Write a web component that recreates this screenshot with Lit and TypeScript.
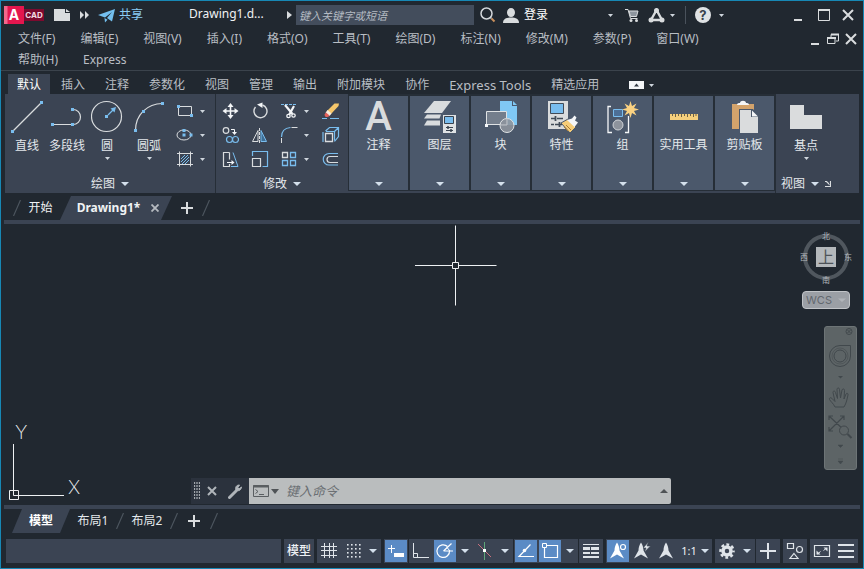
import { LitElement, html, css, svg, nothing } from "lit";
import type { SVGTemplateResult } from "lit";
import { customElement } from "lit/decorators.js";

const BLUE = "#79bdee";
const PALE = "#d9dcde";
const WHITE = "#f4f6f8";

type Art = SVGTemplateResult;

/** Wraps artwork in an svg whose user space starts at x, y. */
const icon = (x: number, y: number, w: number, h: number, art: Art) =>
  html`<svg width=${w} height=${h} viewBox="${x} ${y} ${w} ${h}" fill="none" aria-hidden="true">${art}</svg>`;

/** A 3px grip square centred on the point. */
const grip = (x: number, y: number) =>
  svg`<rect x=${x - 1.5} y=${y - 1.5} width="3" height="3" fill=${BLUE} />`;

const smallCaret = icon(0, 0, 5, 3, svg`<path d="M0 0h5L2.5 3z" fill="#cfd6dd"/>`);
const caret = icon(0, 0, 8, 4, svg`<path d="M0 0h8L4 4z" fill="#d4e0ec"/>`);

/* ---- title bar ---- */
const sheet = icon(0, 0, 16, 12, svg`<path d="M0 0h11v4h5v8H0z" fill="${PALE}"/><path d="M12 0l4 3h-4z" fill="${PALE}"/>`);
const doubleArrow = icon(0, 0, 9, 8, svg`<path d="M0 0l4 4-4 4zM5 0l4 4-4 4z" fill="${PALE}"/>`);
const plane = icon(98, 8, 17, 15, svg`<path d="M98 15L115 9l-3 12.5-5-3.500 5-6-7 5.500z" fill="#73bfef"/><path d="M104.500 18l3 1.800-2.500 2.700z" fill="#73bfef"/>`);
const rightArrow = icon(0, 0, 5, 8, svg`<path d="M0 0l5 4-5 4z" fill="${PALE}"/>`);
const lens = icon(480, 7, 16, 16, svg`<circle cx="486.500" cy="13.500" r="5.500" stroke="#d4d8dc" stroke-width="1.500"/><path d="M490.500 17.500l1 1" stroke="#d4d8dc" stroke-width="1.500"/><path d="M491.500 18.500l3 3" stroke="#c98f5c" stroke-width="2"/>`);
const person = icon(503, 7, 16, 15, svg`<ellipse cx="511" cy="11.500" rx="4" ry="4.500" fill="${PALE}"/><path d="M503 22c0-4 3-5.500 8-5.500s8 1.500 8 5.500z" fill="${PALE}"/>`);
const cart = icon(626, 8, 14, 15, svg`<path d="M626 9.500h3l2.500 9h7" stroke="${PALE}"/><path d="M630 11h9l-1.500 5.500h-6z" fill="#8d959e" stroke="${PALE}"/><circle cx="632" cy="20.500" r="1.500" fill="${PALE}"/><circle cx="637.500" cy="20.500" r="1.500" fill="${PALE}"/>`);
const hub = icon(648, 8, 17, 15, svg`<path d="M656.500 10L651 20h11z" stroke="${PALE}" stroke-width="2.400"/><circle cx="656.500" cy="10.500" r="2.500" fill="${PALE}"/><circle cx="651" cy="20" r="2.500" fill="${PALE}"/><circle cx="662" cy="20" r="2.500" fill="${PALE}"/>`);
const minimize = icon(0, 0, 8, 12, svg`<path d="M0 11h8" stroke="${PALE}" stroke-width="2"/>`);
const maximize = icon(0, 0, 12, 12, svg`<path d="M.5 1.500h11v10H.5z" stroke="${PALE}"/><path d="M0 1h12" stroke="${PALE}" stroke-width="2"/>`);
const closeMark = icon(0, 0, 12, 12, svg`<path d="M1 1l10 10M11 1L1 11" stroke="${PALE}" stroke-width="2"/>`);
const restore = icon(0, 0, 12, 12, svg`<path d="M4 4V1.500h7.500V8H9" stroke="${PALE}"/><path d="M.5 5h7.500v5.500H.5z" stroke="${PALE}"/><path d="M4 1.500h8M0 5h9" stroke="${PALE}" stroke-width="2"/>`);

/* ---- ribbon, draw panel ---- */
const lineArt = icon(11, 100, 32, 36, svg`<path d="M13 132l28-28" stroke="${PALE}" stroke-width="1.200"/>${grip(12.5, 132.5)}${grip(41.5, 103.5)}`);
const polyArt = icon(51, 100, 32, 36, svg`<path d="M53 125.500h20a7.500 7.500 0 0 0 0-15" stroke="${PALE}" stroke-width="1.200"/>${grip(52.5, 125.5)}${grip(72.5, 125.5)}${grip(72.5, 110.5)}`);
const circleArt = icon(91, 100, 32, 36, svg`<circle cx="106.500" cy="117.500" r="15" stroke="${PALE}" stroke-width="1.200"/>${grip(106.5, 117.5)}<path d="M108 116l5-5" stroke=${BLUE} stroke-width="1.300"/><path d="M116 108l-1.500 5.500-4-4z" fill=${BLUE}/>`);
const arcArt = icon(134, 100, 32, 36, svg`<path d="M136.500 131.500C136.500 116 148 104.500 163.500 104.500" stroke="${PALE}" stroke-width="1.200"/>${grip(136.5, 131.5)}${grip(144.5, 112.5)}${grip(163.5, 104.5)}`);
const rectArt = icon(176, 102, 18, 18, svg`<path d="M178.500 106.500h13v9h-13z" stroke="${PALE}"/>${grip(178.5, 106.5)}${grip(191.5, 115.5)}`);
const ellipseArt = icon(176, 126, 18, 18, svg`<ellipse cx="184" cy="135" rx="7" ry="5" stroke="${PALE}"/>${grip(184, 135)}${grip(184, 130.5)}${grip(191, 135)}`);
const hatchArt = icon(176, 150, 18, 18, svg`<path d="M181 159l4-4M181 162l7-7M182 164l7-7M185 164l4-4" stroke=${BLUE}/><path d="M179.500 151.500v15M190.500 151.500v15M177 153.500h16M177 164.500h16" stroke="${PALE}"/>`);

/* ---- ribbon, modify panel ---- */
const moveArt = icon(221, 102, 18, 18, svg`<path d="M230.500 105v12M224.500 111h12" stroke="${WHITE}" stroke-width="1.600"/><path d="M230.500 103l3 4h-6zM230.500 119l3-4h-6zM222.500 111l4-3v6zM238.500 111l-4-3v6z" fill="${WHITE}"/>`);
const rotateArt = icon(251, 102, 18, 18, svg`<path d="M255.500 107a6.500 6.500 0 1 0 7-2" stroke="${PALE}" stroke-width="1.400"/><path d="M257 104.500l5.500-2v5.500z" fill="${WHITE}"/>`);
const trimArt = icon(280, 102, 18, 18, svg`<path d="M281 104.500h16" stroke=${BLUE} stroke-dasharray="3 1"/><path d="M285 105l7.500 9M294 106l-5 9" stroke="${WHITE}" stroke-width="2.200"/><circle cx="288.500" cy="116" r="1.700" stroke="${WHITE}" stroke-width="1.300"/><circle cx="293.500" cy="115.500" r="1.700" stroke="${WHITE}" stroke-width="1.300"/>`);
const eraseArt = icon(322, 102, 18, 18, svg`<path d="M334.500 103.500h4.500l-.5 2.500-8 8.500-4-3z" fill="#f5c66b"/><path d="M327.500 110l4 3.500-2 2.500-4-3z" fill="#f7ebe0"/><path d="M326 112.500l3.500 3c-1.500 2.500-5 2-5-1z" fill="#e2615a"/><path d="M322 118.500h5M330 118.500h9" stroke=${BLUE}/>`);
const copyArt = icon(221, 126, 18, 18, svg`<circle cx="226" cy="130.500" r="2.800" stroke="${PALE}" stroke-width="1.200"/><circle cx="229.500" cy="139.500" r="3" stroke=${BLUE} stroke-width="1.200"/><circle cx="235.500" cy="139.500" r="3" stroke=${BLUE} stroke-width="1.200"/><path d="M231 129.500h3.500v3" stroke="${WHITE}"/><path d="M232 132h5l-2.500 3z" fill="${WHITE}"/>`);
const mirrorArt = icon(251, 126, 18, 18, svg`<path d="M252.500 141.500h5.500v-11z" stroke="${PALE}"/><path d="M261 141.500h5.500l-5.500-11z" fill="#3f6f96" stroke=${BLUE}/><path d="M259.500 128v15" stroke="${PALE}" stroke-dasharray="3 1"/>`);
const filletArt = icon(280, 126, 18, 18, svg`<path d="M281.500 137c0-5 3-9 9-9.500" stroke=${BLUE} stroke-width="1.200"/><path d="M291.500 127.500h6M281.500 138v5" stroke="${PALE}"/>`);
const explodeArt = icon(322, 126, 18, 18, svg`<path d="M325.500 131l4-3.500h9v9l-4 5M338 128l-4 4M326 131.500h8.500v9M323 132v10" stroke=${BLUE} stroke-width="1.200"/><path d="M325.500 133.500h7v8h-7z" stroke="${PALE}" stroke-width="1.300"/>`);
const stretchArt = icon(221, 150, 18, 18, svg`<path d="M229.500 152.500h-6v14h6M229.500 152.500v7M229.500 164v3" stroke="${PALE}" stroke-width="1.200"/><path d="M233 152.500l5 14h-7" stroke=${BLUE}/><path d="M227 162.500h6" stroke="${WHITE}"/><path d="M231.500 160l3 2.500-3 2.500z" fill="${WHITE}"/>`);
const scaleArt = icon(251, 150, 18, 18, svg`<path d="M252.500 156v-4.500h15v15h-5" stroke=${BLUE} stroke-width="1.200"/><path d="M252.500 158.500h8v8h-8z" stroke="${PALE}" stroke-width="1.200"/>`);
const arrayArt = icon(280, 150, 18, 18, svg`<path d="M282.500 152.500h5v5h-5z" stroke="${PALE}" stroke-width="1.300"/><path d="M290.500 152.500h5v5h-5zM282.500 160.500h5v5h-5zM290.500 160.500h5v5h-5z" stroke=${BLUE} stroke-width="1.300"/>`);
const offsetArt = icon(322, 150, 18, 18, svg`<path d="M338 156.500h-8a3 3 0 0 0 0 6h8" stroke="${PALE}" stroke-width="1.200"/><path d="M338 153.500h-9a5.500 5.500 0 0 0 0 11.500h9" stroke=${BLUE} stroke-width="1.200"/>`);

/* ---- ribbon, collapsed panels ---- */
const layersArt = icon(424, 99, 32, 34, svg`<path d="M434 100h17l-9 12h-18z" fill="${PALE}"/><path d="M427 113.500h14l-1.500 4H424z" fill="${PALE}"/><path d="M427 119.500h13v5h-16z" fill="${PALE}"/><path d="M442 113h15v20h-15z" fill="#4b586b"/><path d="M443 114h13v18h-13z" fill="#dfe2e4"/><path d="M444.500 115.500h9v7h-9z" fill=${BLUE} stroke="#39434f"/><path d="M446 126.500h7M446 129.500h7" stroke="#39434f"/><path d="M448 125v3M451 128v3" stroke="#39434f" stroke-width="1.500"/>`);
const blockArt = icon(485, 99, 32, 34, svg`<path d="M500 100h12v5h5v19h-17z" fill="#80c8f4"/><path d="M513 100l4 4h-4z" fill="#80c8f4"/><path d="M486.500 110.500h20v13h-20z" fill="#747e8c" stroke="#dfe2e4"/><circle cx="507" cy="124.500" r="7" fill="#8d939c" fill-opacity=".9" stroke="#dfe2e4"/><path d="M507 117v7h-7" stroke="#bcc1c7"/><path d="M485 123h3v3h-3z" fill="${WHITE}"/>`);
const propsArt = icon(546, 99, 32, 34, svg`<path d="M548 100h20v28h-20z" fill="#dadcdd"/><path d="M550.500 102.500h13v10h-13z" fill=${BLUE} stroke="#414b57"/><path d="M551 117.500h4M557 117.500h6M551 123.500h3M555 123.500h7" stroke="#414b57" stroke-width="1.500"/><path d="M555.500 115v5M559.500 121v5" stroke="#414b57" stroke-width="1.800"/><path d="M561 122l7-4 8 8-6 6z" fill="#f6cd78" stroke="#4b586b"/><path d="M567 119l5-1.500 2.500-3 2 2-1.500 3 3 2-3.500 4.500z" fill="${WHITE}"/><path d="M566 124l5 5M564 126l4 4" stroke="#a97b35"/>`);
const groupArt = icon(607, 99, 32, 34, svg`<path d="M611 105.500h-3v26h4M625 131.500h3.500V115" stroke="${WHITE}" stroke-width="1.300"/><path d="M613.500 108.500h9v7h-9z" fill="#4d6f96" stroke=${BLUE}/><circle cx="618" cy="124" r="5" fill="#8d939c" stroke="#cfd3d7"/><path d="M630.500 100l1.500 5 4.500-2.500-2.500 4.500 5 1.500-5 1.500 2.500 4.500-4.500-2.500-1.500 5-1.500-5-4.500 2.500 2.500-4.500-5-1.500 5-1.500-2.500-4.500 4.500 2.500z" fill="#fbd281"/>`);
const rulerArt = icon(668, 99, 32, 34, svg`<path d="M670 113h28v6h-28z" fill="#f5cf7c"/><path d="M672.500 113v2M675.500 113v3M678.500 113v2M681.500 113v3M684.500 113v2M687.500 113v3M690.500 113v2M693.500 113v3M696 113v2" stroke="#6c6146"/>`);
const pasteArt = icon(729, 99, 32, 34, svg`<path d="M732 103h22v25h-22z" fill="#d3a36c"/><path d="M737 104c0-2 2-2 3-2 0-3 6-3 6 0 1 0 3 0 3 2z" fill="${WHITE}"/><path d="M739 108h14l6 7v18h-20z" fill="#4b586b"/><path d="M740 109h11v7h7v16h-18z" fill="#dadcdd"/><path d="M752 109.500l6 6h-6z" fill="${WHITE}"/>`);
const baseArt = icon(790, 100, 32, 36, svg`<path d="M790 106h14v10h18v14h-32z" fill="#dadcdd"/>`);
const launcher = icon(0, 0, 6, 6, svg`<path d="M0 .5h1.500l3 3M5.500 0v5.500H0" stroke="${PALE}" stroke-width="1.200"/>`);

/* ---- tabs ---- */
const slash = icon(0, 0, 8, 16, svg`<path d="M7.500 0L.5 16" stroke="#4d565f" stroke-width="1.200"/>`);
const plus = icon(0, 0, 12, 12, svg`<path d="M6 0v12M0 6h12" stroke="${PALE}" stroke-width="2"/>`);
const tabClose = icon(0, 0, 8, 8, svg`<path d="M.5.5l7 7M7.500.5l-7 7" stroke="#b5bac0" stroke-width="1.800"/>`);

/* ---- status bar, each on a 24px square ---- */
const INK = "#dfe4e9";
const status = (art: Art) => icon(0, 0, 24, 24, art);
const dots = [6, 10, 14, 18].map((y) => [6, 10, 14, 18].map((x) => svg`<rect x=${x} y=${y - 1} width="1.600" height="1.600" fill=${INK} />`));
const scaleFigure = "M12 3.500c1.500 2 2.500 5 2.500 8l4.500 8-7-4-7 4 4.500-8c0-3 1-6 2.500-8z";
const s = {
  grid: status(svg`<path d="M7.500 4v15M12.500 4v15M16.500 4v15M4 7.500h16M4 11.500h16M4 16.500h16" stroke=${INK}/>`),
  dots: status(svg`${dots}`),
  infer: status(svg`<path d="M7.500 6v8M4 9.500h7" stroke="#fff"/><path d="M10 14h10v4H10z" fill="#fff"/>`),
  ortho: status(svg`<path d="M4.500 4v14.500H20M4.500 14.500h4v4" stroke=${INK}/>`),
  polar: status(svg`<path d="M14.500 7.500a6.300 6.300 0 1 0 2 4" stroke="#fff" stroke-width="1.200"/><path d="M10.500 12l8-7.500M10.500 12H20" stroke="#fff" stroke-width="1.200"/><path d="M14 8.500l3 3.500" stroke="#fff"/>`),
  iso: status(svg`<path d="M5 5l13 13" stroke="#c9707e"/><path d="M11.500 3v18" stroke="#5fa67a"/><path d="M10 10h3v3h-3z" fill="#fff"/>`),
  track: status(svg`<path d="M16.500 5.500L5 17.500h15" stroke="#fff" stroke-width="1.200"/><circle cx="10.500" cy="11.500" r="1.800" fill="#fff"/>`),
  snap: status(svg`<path d="M6.500 6.500h13v12h-13z" stroke="#fff" stroke-width="1.200"/><path d="M4.500 4.500h4v4h-4z" fill="#5b8bc5" stroke="#fff"/>`),
  weight: status(svg`<path d="M4 5.500h16" stroke=${INK}/><path d="M4 9.500h7M12 9.500h8" stroke=${INK} stroke-width="3"/><path d="M4 14h7M12 14h8" stroke=${INK} stroke-width="2"/><path d="M4 18h16" stroke=${INK} stroke-width="2"/>`),
  scaleA: status(svg`<path transform="translate(-1)" d=${scaleFigure} fill="#fff"/><circle cx="17" cy="8" r="2.500" fill="#5b8bc5" stroke="#fff" stroke-width="1.200"/>`),
  scaleB: status(svg`<path transform="translate(-1)" d=${scaleFigure} fill=${INK}/><path d="M18.500 3L13 9h3L14.500 13l6-6H17z" fill=${INK} stroke="#3b4453" stroke-width=".6"/>`),
  scaleC: status(svg`<path d=${scaleFigure} fill=${INK}/>`),
  gear: status(svg`<circle cx="12" cy="12" r="4" stroke=${INK} stroke-width="3.500"/><circle cx="12" cy="12" r="6.500" stroke=${INK} stroke-width="2.500" stroke-dasharray="2.800 2.305" stroke-dashoffset="1.400"/>`),
  plus: status(svg`<path d="M12 4v16M4 12h16" stroke=${INK} stroke-width="2"/>`),
  shapes: status(svg`<path d="M4.500 4.500h6v5h-6zM11 14.500l4 5H7z" stroke=${INK} stroke-width="1.200"/><circle cx="16.500" cy="10.500" r="3" stroke=${INK} stroke-width="1.200"/>`),
  full: status(svg`<path d="M4.500 6.500h15v11h-15z" stroke=${INK} stroke-width="1.200"/><path d="M13.500 8.500h4v4zM10.500 15.500h-4v-4z" fill=${INK}/><path d="M13.500 11.500l2.500-2M10.500 12.500l-3 2.500" stroke=${INK}/>`),
  menu: status(svg`<path d="M4 6h16M4 12h16M4 18h16" stroke=${INK} stroke-width="2"/>`),
};

const MENUS = ["文件(F)", "编辑(E)", "视图(V)", "插入(I)", "格式(O)", "工具(T)", "绘图(D)", "标注(N)", "修改(M)", "参数(P)", "窗口(W)", "帮助(H)", "Express"];
const TABS = ["默认", "插入", "注释", "参数化", "视图", "管理", "输出", "附加模块", "协作", "Express Tools", "精选应用"];

@customElement("app-root")
export class AppRoot extends LitElement {
  static styles = css`
    :host {
      display: flex;
      flex-direction: column;
      box-sizing: border-box;
      min-height: 100vh;
      border: 1px solid #1788b5;
      background: #212830;
      color: #b9bec4;
      font: 12px/16px "Noto Sans", "Noto Sans CJK SC", sans-serif;
      overflow: hidden;
    }
    * { box-sizing: border-box; }
    svg { display: block; flex: none; }
    button {
      display: flex;
      align-items: center;
      justify-content: center;
      margin: 0;
      padding: 0;
      border: 0;
      background: none;
      color: inherit;
      font: inherit;
      white-space: nowrap;
    }
    input {
      min-width: 0;
      border: 0;
      outline: 0;
      font: inherit;
      font-style: italic;
    }

    /* title bar */
    .title { display: flex; align-items: center; height: 28px; padding: 0 3px; color: #f0f2f4; }
    .title > * { flex: none; height: 28px; }
    .title > .logo { display: flex; width: 40px; height: 18px; }
    .logo b { width: 20px; background: linear-gradient(90deg, #f0688c 3px, #e4164e 4px); color: #fff; font: 700 14px/17px "Inter", sans-serif; text-align: center; }
    .logo i { width: 20px; height: 12px; margin-top: 3px; background: #7d0a2e; color: #f3dbe2; font: 700 8px/12px "Inter", sans-serif; text-align: center; }
    .w8 { width: 8px; }
    .w12 { width: 12px; }
    .w16 { width: 16px; }
    .w20 { width: 20px; }
    .w24 { width: 24px; }
    .w28 { width: 28px; }
    .w36 { width: 36px; }
    .share { gap: 4px; margin-left: 10px; color: #8bcdf5; }
    .title > .file { width: 96px; height: 20px; margin: 0 0 0 46px; font-size: 12px; line-height: 18px; font-weight: 400; }
    .title > .search { flex: 0 1 178px; height: 20px; margin-left: 3px; padding: 0 3px; background: #434d5c; color: #dfe3e8; font-size: 11px; }
    .search::placeholder { color: #b4bbc3; opacity: 1; }
    .login { gap: 5px; margin-left: 1px; color: #fff; }
    .title > .fill { flex: 1; }
    .title > .rule { width: 1px; height: 18px; margin: 0 5px 0 7px; background: #4a525c; }
    .help { width: 16px; height: 16px; border-radius: 8px; background: #dfe2e4; color: #39424c; font: 700 13px/16px "Inter", sans-serif; }
    .windows { display: flex; margin-left: 57px; }

    /* menu */
    .menubar { display: flex; justify-content: space-between; padding: 0 4px 0 17px; border-bottom: 1px solid #3b434c; }
    .menus { display: flex; flex-wrap: wrap; gap: 1px 25px; width: calc(100% - 130px); }
    .menus button { height: 20px; }
    .docwin { display: flex; height: 20px; }

    /* ribbon */
    .tabs { display: flex; height: 20px; margin-top: 3px; padding-left: 7px; }
    .tabs button { padding: 2px 10px 0; }
    .tabs .on { padding: 2px 9px 0; margin-right: 1px; background: #3b4453; color: #fff; }
    .tabs .latin { font-size: 13px; }
    .tabs .more { gap: 5px; margin-left: 10px; }
    .ribbon { display: flex; height: 99px; margin: 0 4px; background: #3b4453; color: #e4e8ec; }
    .panel { display: flex; flex: none; flex-direction: column; justify-content: space-between; padding: 5px 0 0; }
    .draw { width: 211px; border-right: 1px solid #262e37; }
    .modify { width: 132px; }
    .view { flex: 1; align-items: flex-start; border-left: 1px solid #262e37; }
    .tools { display: flex; }
    .large { flex-direction: column; justify-content: flex-start; width: 32px; height: 64px; }
    .large span { margin-top: 2px; line-height: 18px; }
    .large svg + span + svg { margin-top: 2px; }
    .wide { width: 48px; }
    .arc { width: 52px; }
    .draw .tools { padding-left: 6px; }
    .pairs { display: grid; grid-template-columns: 20px 14px; grid-auto-rows: 24px; }
    .grid { display: grid; grid-template-columns: 28px 31px 28px 7px 30px; grid-auto-rows: 24px; }
    .grid button:nth-child(5n) { justify-content: flex-end; }
    .heading { align-self: center; gap: 6px; height: 18px; }
    .view .heading { align-self: flex-start; padding-left: 5px; }
    .view .large { width: 60px; }
    .drop { flex: none; flex-direction: column; justify-content: flex-start; width: 61px; height: 97px; padding: 4px 0 0; border: 1px solid #262e37; border-top-width: 2px; background: #4b586b; }
    .drop span { height: 36px; margin-top: 1px; line-height: 20px; }
    .drop .glyph { height: 34px; margin: 0; color: #dadcdd; font: 500 40px/34px "Roboto", sans-serif; }
    .drop svg:last-child { margin-top: 11px; }

    /* drawing tabs */
    .files { display: flex; align-items: center; height: 27px; padding: 3px 0 0 12px; color: #f0f2f4; }
    .strip { height: 4px; margin: 0 3px; background: #3b4453; }
    .files .start { width: 39px; }
    .files .current { gap: 11px; width: 112px; height: 24px; padding-left: 4px; background: #3b4453; clip-path: polygon(11px 0, 100% 0, calc(100% - 11px) 100%, 0 100%); font-weight: 700; }
    .files .add { width: 30px; }

    /* drawing area */
    .canvas { position: relative; flex: 1; min-height: 280px; }
    .cursor { position: absolute; left: 414px; top: 1px; }
    .ucs { position: absolute; left: 8px; bottom: 5px; }
    .ucs text { fill: #eef1f3; font: 200 19px "Inter", sans-serif; }
    .cube { position: absolute; right: 9px; top: 5px; width: 56px; }
    .cube text { fill: #b3b8bd; font: 8px "Noto Sans CJK SC", sans-serif; text-anchor: middle; }
    .cube .top { fill: #4d5358; font-size: 16px; }
    .wcs { position: absolute; right: 13px; top: 67px; gap: 6px; width: 48px; height: 18px; border: 1px solid #c0c3c7; border-radius: 4px; background: #9b9fa5; color: #62676e; font: 11px/16px "Inter", sans-serif; }
    .nav { position: absolute; right: 6px; top: 102px; display: flex; flex-direction: column; align-items: center; width: 33px; height: 144px; border: 1px solid #6d7476; border-radius: 3px; background: #5d6466; }
    .command { position: absolute; left: 0; right: 2px; bottom: 1px; display: flex; justify-content: center; height: 26px; }
    .handle { display: flex; flex: none; align-items: center; gap: 7px; width: 58px; padding-left: 3px; background: #2b323d; }
    .handle .wrench { margin-left: 4px; }
    .prompt { display: flex; flex: 0 1 422px; align-items: center; padding: 0 3px 0 4px; border-radius: 0 2px 2px 0; background: #babdbe; }
    .prompt input { flex: 1; margin-left: 5px; padding: 0; background: none; color: #333; font-size: 13px; }
    .prompt input::placeholder { color: #6b6f73; opacity: 1; }

    /* layout tabs */
    .layouts { display: flex; align-items: center; height: 24px; padding-left: 11px; color: #e4e8ec; }
    .layouts .current { width: 58px; height: 24px; background: #3b4453; clip-path: polygon(10px 0, 100% 0, calc(100% - 10px) 100%, 0 100%); color: #fff; font-weight: 700; }
    .layouts .sheet { width: 46px; }
    .layouts .add { width: 32px; }

    /* status bar */
    .status { display: flex; gap: 3px; margin: 6px 5px 5px; color: #eef1f4; }
    .status > * { flex: none; height: 24px; }
    .box { display: flex; background: #3b4453; }
    .tight { display: flex; gap: 1px; }
    .status > .coords { flex: 1; background: #3b4453; }
    .space { width: 30px; font-weight: 500; }
    .ratio { gap: 4px; width: 34px; font-size: 11px; }
    .box button { height: 24px; }
    .box .lit { border: 1px solid #3b4453; background: #5b8bc5; }
  `;

  private large(label: string, art: unknown, cls = "", arrow = false) {
    return html`<button class="large ${cls}">${art}<span>${label}</span>${arrow ? smallCaret : nothing}</button>`;
  }

  private tool(label: string, art: unknown) {
    return html`<button aria-label=${label}>${art}</button>`;
  }

  private drop(label: string, art: unknown) {
    return html`<button class="drop">${art}<span>${label}</span>${caret}</button>`;
  }

  private st(label: string, art: unknown, cls = "w24") {
    return html`<button class=${cls} aria-label=${label}>${art}</button>`;
  }

  private header() {
    return html`
      <header class="title">
        <div class="logo"><b>A</b><i>CAD</i></div>
        <button class="w36" aria-label="新建">${sheet}</button>
        <button class="w8" aria-label="更多">${doubleArrow}</button>
        <button class="share">${plane}共享</button>
        <h1 class="file">Drawing1.d...</h1>
        <button class="w8" aria-label="展开搜索">${rightArrow}</button>
        <input class="search" type="search" aria-label="搜索" placeholder="键入关键字或短语" />
        <button class="w28" aria-label="查找">${lens}</button>
        <button class="login">${person}登录</button>
        <span class="fill"></span>
        <button class="w16" aria-label="帐户">${smallCaret}</button>
        <button class="w28" aria-label="应用商店">${cart}</button>
        <button class="w20" aria-label="连接">${hub}</button>
        <button class="w12" aria-label="连接选项">${smallCaret}</button>
        <span class="rule"></span>
        <button class="w24" aria-label="帮助"><span class="help">?</span></button>
        <button class="w12" aria-label="帮助选项">${smallCaret}</button>
        <div class="windows">
          <button class="w28" aria-label="最小化">${minimize}</button>
          <button class="w24" aria-label="最大化">${maximize}</button>
          <button class="w24" aria-label="关闭">${closeMark}</button>
        </div>
      </header>
      <nav class="menubar">
        <div class="menus">${MENUS.map((m) => html`<button>${m}</button>`)}</div>
        <div class="docwin">
          <button class="w16" aria-label="最小化图形">${minimize}</button>
          <button class="w20" aria-label="还原图形">${restore}</button>
          <button class="w16" aria-label="关闭图形">${closeMark}</button>
        </div>
      </nav>`;
  }

  private ribbon() {
    return html`
      <div class="tabs">
        ${TABS.map((t, i) => html`<button class=${i === 0 ? "on" : /^[A-Z]/.test(t) ? "latin" : ""}>${t}</button>`)}
        <button class="more" aria-label="功能区显示">
          ${icon(0, 0, 15, 8, svg`<path d="M0 0h15v8H0z" fill="#f4f6f8"/><path d="M5 5.500h5L7.500 2.500z" fill="#333b45"/>`)}${smallCaret}
        </button>
      </div>
      <section class="ribbon">
        <div class="panel draw">
          <div class="tools">
            ${this.large("直线", lineArt)}${this.large("多段线", polyArt, "wide")}
            ${this.large("圆", circleArt, "", true)}${this.large("圆弧", arcArt, "arc", true)}
            <div class="pairs">
              ${this.tool("矩形", rectArt)}${this.tool("矩形选项", smallCaret)}
              ${this.tool("椭圆", ellipseArt)}${this.tool("椭圆选项", smallCaret)}
              ${this.tool("图案填充", hatchArt)}${this.tool("填充选项", smallCaret)}
            </div>
          </div>
          <button class="heading">绘图${caret}</button>
        </div>
        <div class="panel modify">
          <div class="grid">
            ${this.tool("移动", moveArt)}${this.tool("旋转", rotateArt)}${this.tool("修剪", trimArt)}${this.tool("修剪选项", smallCaret)}${this.tool("删除", eraseArt)}
            ${this.tool("复制", copyArt)}${this.tool("镜像", mirrorArt)}${this.tool("圆角", filletArt)}${this.tool("圆角选项", smallCaret)}${this.tool("分解", explodeArt)}
            ${this.tool("拉伸", stretchArt)}${this.tool("缩放", scaleArt)}${this.tool("阵列", arrayArt)}${this.tool("阵列选项", smallCaret)}${this.tool("偏移", offsetArt)}
          </div>
          <button class="heading">修改${caret}</button>
        </div>
        ${this.drop("注释", html`<span class="glyph">A</span>`)}
        ${this.drop("图层", layersArt)}${this.drop("块", blockArt)}${this.drop("特性", propsArt)}
        ${this.drop("组", groupArt)}${this.drop("实用工具", rulerArt)}${this.drop("剪贴板", pasteArt)}
        <div class="panel view">
          ${this.large("基点", baseArt, "", true)}
          <button class="heading">视图${caret}${launcher}</button>
        </div>
      </section>`;
  }

  private drawing() {
    return html`
      <main class="canvas">
        <svg class="cursor" width="82" height="82" viewBox="0 0 82 82" fill="none">
          <path d="M40.500 .5v37M40.500 43.500v37M0 40.500h38M43.500 40.500h38" stroke="#eef1f3" />
          <path d="M37.500 37.500h6v6h-6z" stroke="#eef1f3" />
        </svg>
        <svg class="ucs" width="76" height="84" viewBox="0 -8 76 84" fill="none">
          <path d="M.5 66.500h9v9h-9zM4.500 20v51.500M4.500 71.500H55" stroke="#eef1f3" />
          <text x="6" y="15">Y</text>
          <text x="59" y="70">X</text>
        </svg>
        <svg class="cube" width="56" height="56" viewBox="798 229 56 56" fill="none">
          <circle cx="826" cy="257" r="21" stroke="#50575e" stroke-width="4" />
          <path d="M816 247h20v20h-20z" fill="#b4b8bb" />
          <text class="top" x="826" y="263">上</text>
          <text x="826" y="239">北</text><text x="826" y="283">南</text>
          <text x="804" y="260">西</text><text x="848" y="260">东</text>
        </svg>
        <button class="wcs">WCS${icon(0, 0, 8, 4, svg`<path d="M0 .5h8L4 4z" fill="#b1b5ba"/>`)}</button>
        <aside class="nav" aria-label="导航栏">
          <svg width="31" height="142" viewBox="825 327 31 142" fill="none" stroke="#41484c">
            <circle cx="849" cy="331.500" r="3" /><path d="M847.500 330l3 3M850.500 330l-3 3" />
            <path d="M840 345.500h10.500V356a10.500 10.500 0 1 1-10.500-10.500z" /><circle cx="840" cy="356" r="6" />
            <circle cx="840" cy="356" r="8" stroke-opacity=".5" />
            <path d="M838 376h5l-2.500 2.500z" fill="#41484c" stroke="none" />
            <path d="M835 407c-2-4-4-5-5.500-7.500-.5-2 1.500-2.500 3-.5l2.500 2.500-2-9c0-2 2-2 2.500 0l2 6-.5-9c0-2 2.500-2 2.500 0l1 8.500 1.500-8c.5-1.500 2.500-1.500 2.500.5l-.5 8.500 2-5c1-1.500 2.500-.5 2 1-1 4-1.500 8-4 12z" />
            <path d="M829 416l16 15M844 416l-15 15M829 420v-4h4M840 416h4v4M829 427v4h4" stroke-width="1.200" />
            <circle cx="844" cy="430.500" r="4.500" fill="#5d6466" /><path d="M847.500 434l4 4" stroke-width="2" />
            <path d="M838 445h5l-2.500 2.500zM838 459h5M838 461h5l-2.500 3z" fill="#41484c" stroke-width=".5" />
          </svg>
        </aside>
        <div class="command">
          <div class="handle">
            ${icon(0, 0, 6, 18, svg`<path d="M.5 0v18M5.500 0v18M3 0v18" stroke="#a3a8ae" stroke-dasharray="2 1" stroke-width="1.300"/>`)}
            <button aria-label="关闭命令行">${icon(0, 0, 10, 10, svg`<path d="M1 1l8 8M9 1L1 9" stroke="#b0b5ba" stroke-width="2"/>`)}</button>
            <button class="wrench" aria-label="自定义">${icon(0, 0, 15, 15, svg`<path d="M1.500 13.500l7-7" stroke="#b0b5ba" stroke-width="3" stroke-linecap="round"/><path d="M11.500 1c-3 0-4.500 2-3.500 5 2.500 1.500 5 .5 5.500-3l-2.500 2-1.200-1.200z" fill="#b0b5ba" stroke="#b0b5ba"/>`)}</button>
          </div>
          <div class="prompt">
            ${icon(0, 0, 16, 12, svg`<path d="M.5.5h15v11H.5z" stroke="#5a5e61"/><path d="M0 1.500h16" stroke="#5a5e61" stroke-width="2"/><path d="M2.500 4.500l2.500 2-2.500 2M6 9.500h5" stroke="#5a5e61"/>`)}
            <button class="w12" aria-label="最近命令">${icon(0, 0, 8, 5, svg`<path d="M0 0h8L4 5z" fill="#4f5356"/>`)}</button>
            <input aria-label="命令" placeholder="键入命令" />
            <button aria-label="展开历史">${icon(0, 0, 8, 4, svg`<path d="M0 4h8L4 0z" fill="#4f5356"/>`)}</button>
          </div>
        </div>
      </main>`;
  }

  private footer() {
    const arrow = (label: string) => this.st(label, caret, "w16");
    return html`
      <footer class="status">
        <div class="coords"></div>
        <button class="box space">模型</button>
        <div class="box">${this.st("栅格", s.grid)}${this.st("捕捉", s.dots)}${arrow("捕捉选项")}</div>
        <div class="tight">
          <div class="box">${this.st("动态输入", s.infer, "w24 lit")}</div>
          <div class="box">
            ${this.st("正交", s.ortho)}${this.st("极轴追踪", s.polar, "w24 lit")}${arrow("极轴选项")}
            ${this.st("等轴测", s.iso)}${arrow("等轴测选项")}
          </div>
          <div class="box">${this.st("对象追踪", s.track, "w24 lit")}${this.st("对象捕捉", s.snap, "w24 lit")}${arrow("对象捕捉选项")}</div>
          <div class="box">${this.st("线宽", s.weight)}</div>
        </div>
        <div class="box">
          ${this.st("注释可见性", s.scaleA, "w24 lit")}${this.st("自动缩放", s.scaleB)}${this.st("注释比例", s.scaleC)}
          <button class="ratio">1:1${caret}</button>
        </div>
        <div class="tight">
          <div class="box">${this.st("工作空间", s.gear)}${arrow("工作空间选项")}</div>
          <div class="box">${this.st("注释监视器", s.plus)}</div>
        </div>
        <div class="box">${this.st("隔离对象", s.shapes)}</div>
        <div class="box">${this.st("全屏", s.full)}${this.st("自定义", s.menu)}</div>
      </footer>`;
  }

  render() {
    return html`
      ${this.header()}${this.ribbon()}
      <div class="files">
        ${slash}<button class="start">开始</button>
        <button class="current">Drawing1* ${tabClose}</button>
        <button class="add" aria-label="新图形">${plus}</button>${slash}
      </div>
      <div class="strip"></div>
      ${this.drawing()}
      <div class="strip"></div>
      <div class="layouts">
        <button class="current">模型</button>
        <button class="sheet">布局1</button>${slash}
        <button class="sheet">布局2</button>${slash}
        <button class="add" aria-label="新布局">${plus}</button>${slash}
      </div>
      ${this.footer()}`;
  }
}
